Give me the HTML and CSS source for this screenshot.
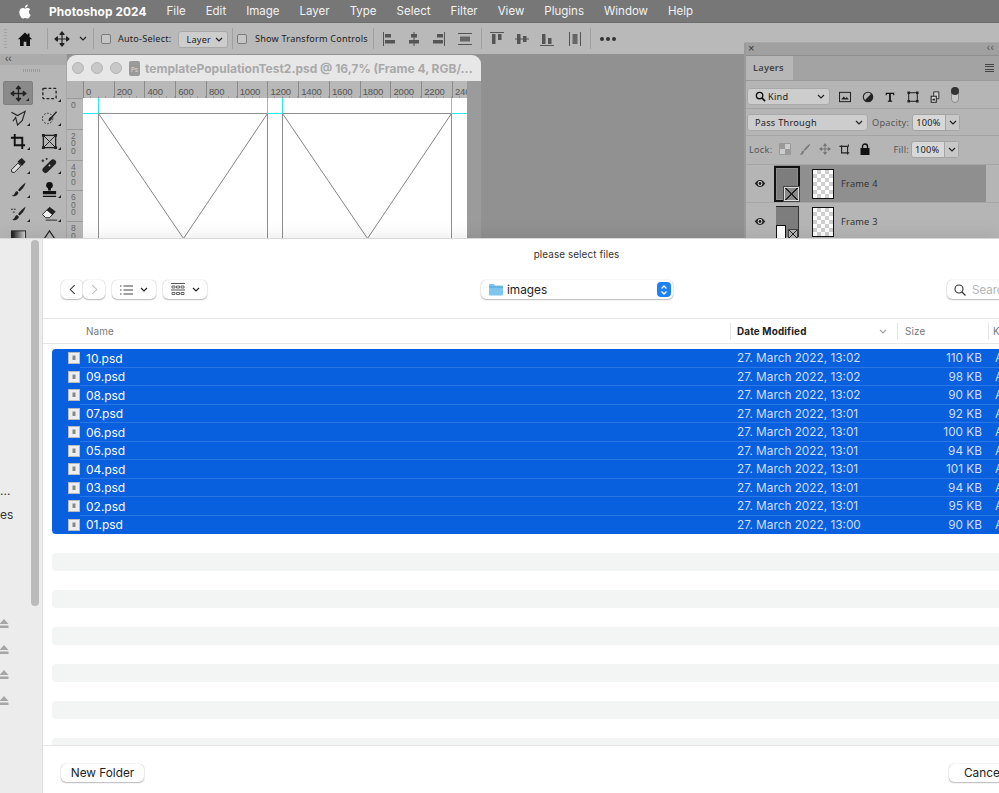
FILE: index.html
```html
<!DOCTYPE html>
<html lang="en">
<head>
<meta charset="utf-8">
<title>Photoshop 2024 - please select files</title>
<link rel="stylesheet" href="styles.css">
</head>
<body>
<svg class="defs" width="0" height="0" aria-hidden="true">
  <symbol id="move" viewBox="0 0 16 16"><path d="M8 1v14M1 8h14M8 1 6 3.400h4zM8 15l-2-2.400h4zM1 8l2.400-2v4zM15 8l-2.400-2v4z" fill="#222" stroke="#222" stroke-width="1.200" stroke-linejoin="round"/></symbol>
  <symbol id="chev" viewBox="0 0 8 5"><path d="M1 1l3 3 3-3" fill="none" stroke="#222" stroke-width="1.200"/></symbol>
  <symbol id="eye" viewBox="0 0 14 10"><path d="M1 5c2-3 4-4 6-4s4 1 6 4c-2 3-4 4-6 4S3 8 1 5z" fill="#222"/><circle cx="7" cy="5" r="2.800" fill="#ddd"/><circle cx="7" cy="5" r="1.700" fill="#222"/></symbol>
  <symbol id="eject" viewBox="0 0 10 9"><path d="M5 0l4.500 5h-9zM.5 6.500h9V9h-9z" fill="#a6a6a6"/></symbol>
  <symbol id="doc" viewBox="0 0 12 12"><rect width="12" height="12" fill="#eee"/><rect x=".5" y=".5" width="11" height="11" fill="none" stroke="#bbb"/><rect x="4.500" y="3.500" width="3" height="4.500" fill="#888"/></symbol>
</svg>
<div class="screen">
  <header class="menubar">
    <svg class="apple" viewBox="0 0 24 24"><path fill="#fff" d="M12.152 6.896c-.948 0-2.415-1.078-3.960-1.040-2.040.027-3.910 1.183-4.961 3.014-2.117 3.675-.546 9.103 1.519 12.090 1.013 1.454 2.208 3.090 3.792 3.039 1.520-.065 2.090-.987 3.935-.987 1.831 0 2.350.987 3.960.948 1.637-.026 2.676-1.480 3.676-2.948 1.156-1.688 1.636-3.325 1.662-3.415-.039-.013-3.182-1.221-3.220-4.857-.026-3.040 2.480-4.494 2.597-4.559-1.429-2.090-3.623-2.324-4.390-2.376-2-.156-3.675 1.090-4.610 1.090zM15.530 3.830c.843-1.012 1.400-2.427 1.245-3.830-1.207.052-2.662.805-3.532 1.818-.780.896-1.454 2.338-1.273 3.714 1.338.104 2.715-.688 3.559-1.701"/></svg>
    <strong class="app">Photoshop 2024</strong>
    <span>File</span><span>Edit</span><span>Image</span><span>Layer</span><span>Type</span><span>Select</span><span>Filter</span><span>View</span><span>Plugins</span><span>Window</span><span>Help</span>
  </header>
  <div class="options">
    <div class="grp g-home"><i class="grip"></i><svg class="ic16" viewBox="0 0 16 16"><path d="M8 1.500.8 8.200h2.200V15h3.700v-4.300h2.600V15H13V8.200h2.200L12.500 5.700V2.500h-1.800v1.500z" fill="#111"/></svg></div>
    <div class="grp g-move"><svg class="ic16"><use href="#move"/></svg><svg class="chev"><use href="#chev"/></svg></div>
    <div class="grp g-auto"><i class="check"></i><span>Auto-Select:</span><div class="select sel-layer">Layer<svg class="chev"><use href="#chev"/></svg></div></div>
    <div class="grp g-show"><i class="check"></i><span>Show Transform Controls</span></div>
    <div class="grp g-align">
      <svg class="ic16" viewBox="0 0 16 16"><path d="M1.500 1v14" stroke="#555" fill="none"/><path d="M3 3h6v3.500H3zM3 9h10v3.500H3z" fill="#555"/></svg>
      <svg class="ic16" viewBox="0 0 16 16"><path d="M8 1v14" stroke="#555" fill="none"/><path d="M5 3h6v3.500H5zM3 9h10v3.500H3z" fill="#555"/></svg>
      <svg class="ic16" viewBox="0 0 16 16"><path d="M14.500 1v14" stroke="#555" fill="none"/><path d="M7 3h6v3.500H7zM3 9h10v3.500H3z" fill="#555"/></svg>
      <svg class="ic16 i-last" viewBox="0 0 16 16"><path d="M1 2.500h14M1 13.500h14" stroke="#555" fill="none"/><path d="M3 5.500h10v5H3z" fill="#666"/></svg>
    </div>
    <div class="grp g-dist">
      <svg class="ic16" viewBox="0 0 16 16"><path d="M1 1.500h14" stroke="#555" fill="none"/><path d="M3 3h3.500v10H3zM9 3h3.500v6H9z" fill="#555"/></svg>
      <svg class="ic16" viewBox="0 0 16 16"><path d="M1 8h14" stroke="#555" fill="none"/><path d="M3 3h3.500v10H3zM9 5h3.500v6H9z" fill="#555"/></svg>
      <svg class="ic16" viewBox="0 0 16 16"><path d="M1 14.500h14" stroke="#555" fill="none"/><path d="M3 3h3.500v10H3zM9 7h3.500v6H9z" fill="#555"/></svg>
      <svg class="ic16 i-last" viewBox="0 0 16 16"><path d="M2.500 1v14M13.500 1v14" stroke="#555" fill="none"/><path d="M5.500 3h5v10h-5z" fill="#666"/></svg>
    </div>
    <div class="dots"><i></i><i></i><i></i></div>
  </div>

  <aside class="tools">
    <div class="tools-head">‹‹</div>
    <div class="tools-grip"></div>
    <div class="tool-grid">
      <div class="tool active"><svg class="ic18"><use href="#move"/></svg></div>
      <div class="tool"><svg class="ic18" viewBox="0 0 18 18"><rect x="2" y="3.500" width="14" height="11" rx="1" fill="none" stroke="#222" stroke-width="1.400" stroke-dasharray="3 2"/></svg></div>
      <div class="tool"><svg class="ic18" viewBox="0 0 18 18"><path d="M1.500 3.500 8 7l8-4.500L13 12l-5 5-2-8-3 4" fill="none" stroke="#222" stroke-width="1.200"/></svg></div>
      <div class="tool"><svg class="ic18" viewBox="0 0 18 18"><circle cx="7" cy="10" r="5.500" fill="none" stroke="#333" stroke-dasharray="2 1.500"/><path d="M8 13c0-3 1-4 3-5l5-5.500 1 1L12 9c-.5 2.500-2 4-4 4z" fill="#222"/></svg></div>
      <div class="tool"><svg class="ic18" viewBox="0 0 18 18"><path d="M5 1v12h11M1 5h12v12" fill="none" stroke="#111" stroke-width="2"/></svg></div>
      <div class="tool"><svg class="ic18" viewBox="0 0 18 18"><rect x="2.500" y="2.500" width="13" height="13" fill="none" stroke="#222" stroke-width="1.400"/><path d="M2.500 2.500l13 13M15.500 2.500l-13 13" stroke="#222"/><path d="M1 1h3v3H1zM14 1h3v3h-3zM1 14h3v3H1zM14 14h3v3h-3z" fill="#222"/></svg></div>
      <div class="tool"><svg class="ic18" viewBox="0 0 18 18"><path d="M2 16l-.5-2.500 7-7 3 3-7 7z" fill="#ddd" stroke="#222"/><path d="M8 5l2-2 2.500-2 4 4-2 2.500-2 2z" fill="#222"/></svg></div>
      <div class="tool"><svg class="ic18" viewBox="0 0 18 18"><path d="M2.500 11.500l8-8a3 3 0 0 1 4.500 4.500l-8 8a3 3 0 0 1-4.500-4.500z" fill="#222"/><circle cx="9" cy="9" r="1" fill="#ccc"/><path d="M2 2.500v3M.5 4h3M6 1v2M5 2h2" stroke="#222"/></svg></div>
      <div class="tool"><svg class="ic18" viewBox="0 0 18 18"><path d="M16.500 1.500c-2 1.500-6 5-8 8l1.500 1.500c3-2 6-6 6.500-9.500zM7.500 10.500c-2 .5-2 2-3 3.500-.5.800-2 1.500-2.500 1.500 2 1 6 1 7-3z" fill="#222"/></svg></div>
      <div class="tool"><svg class="ic18" viewBox="0 0 18 18"><circle cx="9" cy="4.500" r="3.500" fill="#111"/><path d="M7.500 7h3v3h-3zM2 10.500h14V14H2zM2 15.500h14V17H2z" fill="#111"/></svg></div>
      <div class="tool"><svg class="ic18" viewBox="0 0 18 18"><path d="M16.500 1.500c-2 1.500-6 5-8 8l1.500 1.500c3-2 6-6 6.500-9.500zM7.500 10.500c-2 .5-2 2-3 3.500l-2 1.500c2 1 6 1 7-3z" fill="#222"/><path d="M1 4.500h6M3 7.500h3" stroke="#222" stroke-dasharray="2 1"/></svg></div>
      <div class="tool"><svg class="ic18" viewBox="0 0 18 18"><path d="M1.500 10 9 2.500l6 4.500-6 6.500H5z" fill="#eee" stroke="#222"/><path d="M9 2.500l6 4.500-3 3.500-6-5z" fill="#222"/><path d="M5 16h12" stroke="#222"/></svg></div>
      <div class="tool"><svg class="ic18" viewBox="0 0 18 18"><defs><linearGradient id="gr" x1="0" x2="1"><stop offset="0" stop-color="#111"/><stop offset="1" stop-color="#ddd"/></linearGradient></defs><rect x="1.500" y="2" width="15" height="14" fill="url(#gr)" stroke="#222"/></svg></div>
      <div class="tool"><svg class="ic18" viewBox="0 0 18 18"><path d="M9 2l6 9-3 5H6l-3-5z" fill="none" stroke="#222" stroke-width="1.200"/></svg></div>
    </div>
  </aside>

  <section class="doc">
    <div class="doc-title">
      <i class="light"></i><i class="light"></i><i class="light"></i>
      <span class="ps-file">Ps</span>
      <span class="doc-name">templatePopulationTest2.psd @ 16,7% (Frame 4, RGB/...</span>
    </div>
    <div class="ruler-h">
      <span class="corner"></span>
      <span class="rt">0</span><span class="rt">200</span><span class="rt">400</span><span class="rt">600</span><span class="rt">800</span><span class="rt">1000</span><span class="rt">1200</span><span class="rt">1400</span><span class="rt">1600</span><span class="rt">1800</span><span class="rt">2000</span><span class="rt">2200</span><span class="rt rt-end">240</span>
    </div>
    <div class="doc-body">
      <div class="ruler-v">
        <span class="vt">0</span><span class="vt">2<br>0<br>0</span><span class="vt">4<br>0<br>0</span><span class="vt">6<br>0<br>0</span><span class="vt">8<br>0<br>0</span>
      </div>
      <svg class="canvas" viewBox="0 0 384 160">
        <path d="M15.500 15.500V160M184.500 15.500V160M199.500 15.500V160M368.500 15.500V160M0 15.500H384" fill="none" stroke="#8f8f8f" stroke-width="1"/>
        <path d="M15.500 15.500 100.500 140.500 184.500 15.500M199.500 15.500 284.500 140.500 368.500 15.500" fill="none" stroke="#777" stroke-width=".9"/>
        <path d="M15.500 0V15.500M184.500 0V15.500M199.500 0V15.500M368.500 0V15.500M0 15.500H15.500M184.500 15.500H199.500M368.500 15.500H384" fill="none" stroke="#2fe8ee" stroke-width="1"/>
      </svg>
    </div>
  </section>

  <section class="layers">
    <div class="panel-top"><span>×</span><span class="collapse">‹‹</span></div>
    <div class="tabs"><span class="tab">Layers</span><span class="burger"><i></i><i></i><i></i><i></i></span></div>
    <div class="row-filter">
      <div class="select sel-kind"><svg class="mag" viewBox="0 0 12 12"><circle cx="5" cy="5" r="3.500" fill="none" stroke="#111" stroke-width="1.500"/><path d="M7.500 7.500 11 11" stroke="#111" stroke-width="1.800"/></svg><span class="sel-txt">Kind</span><svg class="chev"><use href="#chev"/></svg></div>
      <svg class="fi" viewBox="0 0 14 12"><rect x=".6" y=".6" width="12.800" height="10.800" fill="none" stroke="#222" stroke-width="1.200"/><path d="M2.500 9l3-3.500 2 2 1.500-1.500 2.500 3z" fill="#222"/></svg>
      <svg class="fi" viewBox="0 0 14 14"><circle cx="7" cy="7" r="5.500" fill="none" stroke="#222" stroke-width="1.300"/><path d="M11 3a5.500 5.500 0 0 1-8 8z" fill="#222"/></svg>
      <svg class="fi" viewBox="0 0 14 14"><path d="M2 2h10v3h-1l-.5-1.500H8V11l1.500.5V12.500h-5V11.500L6 11V3.500H3.500L3 5H2z" fill="#111"/></svg>
      <svg class="fi" viewBox="0 0 14 14"><rect x="2" y="2" width="10" height="10" fill="none" stroke="#222" stroke-width="1.200"/><path d="M.5.5h3v3h-3zM10.500.5h3v3h-3zM.5 10.500h3v3h-3zM10.500 10.500h3v3h-3z" fill="#222"/></svg>
      <svg class="fi" viewBox="0 0 14 14"><path d="M5.500 1h6v8h-6z" fill="#ccc" stroke="#222"/><path d="M2.500 6h6v7h-6z" fill="#ddd" stroke="#222" stroke-width="1.200"/><path d="M4 9h3v2H4z" fill="#222"/></svg>
      <div class="toggle"><i></i></div>
    </div>
    <div class="row-blend">
      <div class="select sel-blend">Pass Through<svg class="chev"><use href="#chev"/></svg></div>
      <span class="lbl">Opacity:</span>
      <div class="combo"><span>100%</span><b><svg class="chev"><use href="#chev"/></svg></b></div>
    </div>
    <div class="row-lock">
      <span class="lbl">Lock:</span>
      <svg class="li" viewBox="0 0 12 12"><path d="M.5.5h11v11H.5z" fill="#ccc" stroke="#999"/><path d="M1 1h5v5H1zM6 6h5v5H6z" fill="#999"/></svg>
      <svg class="li" viewBox="0 0 12 12"><path d="M11.500.5C9 2 6 5 4.500 7l1 1c2-1.500 5-4.500 6-7.500zM4 7.500c-1.500.5-1 2-2 3L.5 11.500c2 .5 4 0 4.500-3z" fill="#777"/></svg>
      <svg class="li" viewBox="0 0 16 16"><use href="#move" opacity=".45"/></svg>
      <svg class="li" viewBox="0 0 14 14"><path d="M3 2.500v9h9M.5 4h9.500v9.500" fill="none" stroke="#222" stroke-width="1.300"/><path d="M11 1.500v3" stroke="#222"/></svg>
      <svg class="li" viewBox="0 0 12 12"><path d="M3.500 5.500V3.500a2.500 2.500 0 0 1 5 0v2" fill="none" stroke="#111" stroke-width="1.400"/><rect x="1.500" y="5" width="9" height="7" fill="#111"/></svg>
      <span class="lbl lbl-fill">Fill:</span>
      <div class="combo"><span>100%</span><b><svg class="chev"><use href="#chev"/></svg></b></div>
    </div>
    <div class="layer current">
      <span class="eye-col"><svg class="eye"><use href="#eye"/></svg></span>
      <span class="thumb thumb-a"><i class="badge"></i></span>
      <span class="mask"></span>
      <span class="lname">Frame 4</span>
    </div>
    <div class="layer">
      <span class="eye-col"><svg class="eye"><use href="#eye"/></svg></span>
      <span class="thumb thumb-b"><i class="page"></i><i class="badge2"></i></span>
      <span class="mask"></span>
      <span class="lname">Frame 3</span>
    </div>
  </section>

  <section class="dialog">
    <aside class="side">
      <div class="thumbbar"></div>
      <div class="side-t1">...</div>
      <div class="side-t2">es</div>
      <svg class="ej ej1"><use href="#eject"/></svg>
      <svg class="ej"><use href="#eject"/></svg>
      <svg class="ej"><use href="#eject"/></svg>
      <svg class="ej"><use href="#eject"/></svg>
    </aside>
    <div class="main">
      <div class="d-title">please select files</div>
      <div class="d-bar">
        <div class="seg">
          <span class="btn b-nav"><svg viewBox="0 0 8 12" class="nav"><path d="M6.500 1 1.500 6l5 5" fill="none" stroke="#333" stroke-width="1.200"/></svg></span>
          <span class="btn b-nav"><svg viewBox="0 0 8 12" class="nav"><path d="M1.500 1l5 5-5 5" fill="none" stroke="#bbb" stroke-width="1.200"/></svg></span>
        </div>
        <span class="btn b-view">
          <svg class="vi" viewBox="0 0 13 10"><path d="M3.500 1H13M3.500 5H13M3.500 9H13" stroke="#444" stroke-width="1.100"/><path d="M0 .5h1.500v1H0zM0 4.500h1.500v1H0zM0 8.500h1.500v1H0z" fill="#444"/></svg>
          <svg class="chev"><use href="#chev"/></svg>
        </span>
        <span class="btn b-view b-grid">
          <svg class="vi2" viewBox="0 0 14 14"><path d="M0 .5h14M0 7h14" stroke="#555"/><path d="M1 3h3v2H1zM5.500 3h3v2h-3zM10 3h3v2h-3zM1 9.500h3v2H1zM5.500 9.500h3v2h-3zM10 9.500h3v2h-3z" fill="none" stroke="#444" stroke-width=".8"/></svg>
          <svg class="chev"><use href="#chev"/></svg>
        </span>
        <div class="path">
          <svg class="folder" viewBox="0 0 14 12"><path d="M0 1.500A1 1 0 0 1 1 .5h4l1 1.500h7a1 1 0 0 1 1 1V11a1 1 0 0 1-1 1H1a1 1 0 0 1-1-1z" fill="#7ec6ee"/><path d="M0 3h14v1H0z" fill="#4ea4d8"/></svg>
          <span>images</span>
          <span class="stepper"><svg viewBox="0 0 8 12" class="step"><path d="M1.500 4.500 4 2l2.500 2.500M1.500 7.500 4 10l2.500-2.500" fill="none" stroke="#fff" stroke-width="1.300"/></svg></span>
        </div>
        <div class="search">
          <svg class="srch" viewBox="0 0 12 12"><circle cx="5" cy="5" r="4" fill="none" stroke="#333" stroke-width="1.100"/><path d="M8 8l3.500 3.500" stroke="#333" stroke-width="1.200"/></svg>
          <span>Search</span>
        </div>
      </div>
      <div class="head">
        <span class="h-name">Name</span>
        <span class="h-date"><b>Date Modified</b><svg class="chev lt"><use href="#chev"/></svg></span>
        <span class="h-size">Size</span>
        <span class="h-kind">Kind</span>
      </div>
      <div class="list">
        <div class="files">
          <div class="file"><svg class="ficon"><use href="#doc"/></svg><span class="fn">10.psd</span><span class="fd">27. March 2022, 13:02</span><span class="fs">110 KB</span><span>Adobe</span></div>
          <div class="file"><svg class="ficon"><use href="#doc"/></svg><span class="fn">09.psd</span><span class="fd">27. March 2022, 13:02</span><span class="fs">98 KB</span><span>Adobe</span></div>
          <div class="file"><svg class="ficon"><use href="#doc"/></svg><span class="fn">08.psd</span><span class="fd">27. March 2022, 13:02</span><span class="fs">90 KB</span><span>Adobe</span></div>
          <div class="file"><svg class="ficon"><use href="#doc"/></svg><span class="fn">07.psd</span><span class="fd">27. March 2022, 13:01</span><span class="fs">92 KB</span><span>Adobe</span></div>
          <div class="file"><svg class="ficon"><use href="#doc"/></svg><span class="fn">06.psd</span><span class="fd">27. March 2022, 13:01</span><span class="fs">100 KB</span><span>Adobe</span></div>
          <div class="file"><svg class="ficon"><use href="#doc"/></svg><span class="fn">05.psd</span><span class="fd">27. March 2022, 13:01</span><span class="fs">94 KB</span><span>Adobe</span></div>
          <div class="file"><svg class="ficon"><use href="#doc"/></svg><span class="fn">04.psd</span><span class="fd">27. March 2022, 13:01</span><span class="fs">101 KB</span><span>Adobe</span></div>
          <div class="file"><svg class="ficon"><use href="#doc"/></svg><span class="fn">03.psd</span><span class="fd">27. March 2022, 13:01</span><span class="fs">94 KB</span><span>Adobe</span></div>
          <div class="file"><svg class="ficon"><use href="#doc"/></svg><span class="fn">02.psd</span><span class="fd">27. March 2022, 13:01</span><span class="fs">95 KB</span><span>Adobe</span></div>
          <div class="file"><svg class="ficon"><use href="#doc"/></svg><span class="fn">01.psd</span><span class="fd">27. March 2022, 13:00</span><span class="fs">90 KB</span><span>Adobe</span></div>
        </div>
        <div class="stripe"></div><div class="stripe"></div><div class="stripe"></div><div class="stripe"></div><div class="stripe"></div><div class="stripe"></div>
      </div>
      <div class="foot">
        <span class="btn b-foot">New Folder</span>
        <span class="btn b-foot b-cancel">Cancel</span>
      </div>
    </div>
  </section>
</div>
</body>
</html>
```

FILE: styles.css
```css
* { box-sizing: border-box; }
html, body { margin: 0; padding: 0; }
body { font-family: "Inter", "Liberation Sans", sans-serif; background: #909090; }
i { display: block; font-style: normal; }
svg { display: block; flex-shrink: 0; }
.defs { position: absolute; }
.screen { position: relative; width: 999px; height: 793px; overflow: hidden; background: #919191; }

/* menu bar */
.menubar { height: 23px; background: #777; border-bottom: 1px solid #6c6c6c; display: flex; align-items: center; gap: 20px; padding-left: 18px; color: #f2f2f2; font-size: 11.500px; }
.apple { width: 14px; height: 15px; margin-right: -3px; }
.app { font-weight: 700; color: #fff; font-size: 11.900px; letter-spacing: .08px; }

/* options */
.options { height: 31px; background: #b9b9b9; display: flex; align-items: center; font-family: "Noto Sans", sans-serif; font-size: 9.100px; letter-spacing: .22px; color: #222; white-space: nowrap; }
.grp { height: 21px; display: flex; align-items: center; border-right: 1px solid #a0a0a0; position: relative; }
.grip { width: 3px; height: 20px; margin-left: 4px; margin-right: 10px; background: repeating-linear-gradient(#a2a2a2 0 1px, transparent 1px 3px); }
.ic16 { width: 16px; height: 16px; }
.chev { width: 8px; height: 5px; }
.g-home { width: 48px; }
.g-move { width: 46px; padding-left: 6px; gap: 9px; }
.g-auto { width: 139px; padding-left: 7px; gap: 7px; }
.g-show { width: 141px; padding-left: 4px; gap: 8px; }
.g-align { width: 108px; padding-left: 8px; gap: 8px; }
.g-dist { width: 109px; padding-left: 7px; gap: 9px; }
.i-last { margin-left: 3px; }
.check { width: 10px; height: 10px; border: 1px solid #7c7c7c; background: #c6c6c6; border-radius: 2px; }
.select { display: flex; align-items: center; justify-content: space-between; background: #cdcdcd; border: 1px solid #a9a9a9; border-radius: 3px; height: 17px; }
.sel-layer { width: 50px; padding: 0 4px 0 7px; margin-top: 1px; }
.dots { display: flex; gap: 2px; margin-left: 9px; }
.dots i { width: 4px; height: 4px; border-radius: 50%; background: #333; }

/* toolbar */
.tools { position: absolute; left: 0; top: 54px; width: 67px; height: 190px; background: #b6b6b6; border-right: 1px solid #a6a6a6; }
.tools-head { height: 11px; background: #ababab; font: 10px/10px "Liberation Sans", sans-serif; color: #444; padding-left: 5px; }
.tools-grip { height: 3px; width: 18px; margin: 4px auto 0 23px; background: repeating-linear-gradient(90deg, #999 0 1px, transparent 1px 2px); }
.tool-grid { display: grid; grid-template-columns: 30px 30px; grid-auto-rows: 24px; column-gap: 1px; padding: 9px 0 0 3px; }
.tool { display: flex; align-items: center; justify-content: center; position: relative; border-radius: 2px; }
.tool::after { content: ""; position: absolute; right: 3px; bottom: 3px; border-style: solid; border-width: 0 0 3px 3px; border-color: transparent transparent #222 transparent; }
.tool.active { background: #8a8a8a; border: 1px solid #7f7f7f; }
.ic18 { width: 17px; height: 17px; }

/* document */
.doc { position: absolute; left: 67px; top: 55px; width: 414px; height: 190px; background: #9b9b9b; border-radius: 9px 9px 0 0; overflow: hidden; }
.doc-title { height: 26px; background: #e7e7e7; display: flex; align-items: center; padding-left: 5px; gap: 8px; }
.light { width: 12px; height: 12px; border-radius: 50%; background: #c8c8c8; border: 1px solid #b4b4b4; margin-right: -1px; }
.ps-file { width: 11px; height: 15px; background: #9a9a9a; border-radius: 2px; font-size: 6px; line-height: 17px; text-align: center; color: #ddd; }
.doc-name { font-weight: 700; font-size: 12px; color: #a9a9a9; white-space: nowrap; margin-left: -3px; }
.ruler-h { height: 17px; display: flex; background: #b8b8b8; width: 400px; font: 9.500px/1 "Liberation Sans", sans-serif; color: #555; }
.corner { width: 16px; background: #b3b3b3; }
.rt { width: 30.800px; border-left: 1px solid #8a8a8a; padding: 6px 0 0 2px; letter-spacing: -.2px; background: repeating-linear-gradient(90deg, transparent 0 6px, #999 6px 7px, transparent 7px 7.700px) bottom / 100% 2px no-repeat; }
.rt-end { width: 15px; overflow: hidden; }
.doc-body { display: flex; height: 147px; }
.ruler-v { width: 16px; background: #b8b8b8; font: 8.500px/7.500px "Liberation Sans", sans-serif; color: #666; overflow: hidden; flex-shrink: 0; }
.vt { display: block; height: 30.800px; border-top: 1px solid #9a9a9a; padding: 3px 0 0 4px; }
.canvas { width: 384px; height: 160px; background: #fff; flex-shrink: 0; }

/* layers panel */
.layers { position: absolute; left: 744px; top: 42px; width: 255px; height: 200px; background: #b5b5b5; border-left: 2px solid #9a9a9a; border-top: 1px solid #a8a8a8; border-radius: 2px 0 0 0; font-family: "Noto Sans", sans-serif; font-size: 9.200px; letter-spacing: .25px; color: #222; white-space: nowrap; }
.panel-top { height: 12px; background: #a0a0a0; display: flex; justify-content: space-between; padding: 0 5px 0 2px; font: 11px/10px "Liberation Sans", sans-serif; color: #333; }
.collapse { font-size: 10px; color: #555; }
.tabs { height: 26px; background: #a3a3a3; display: flex; align-items: stretch; justify-content: space-between; border-top: 1px solid #8f8f8f; border-bottom: 1px solid #9a9a9a; }
.tab { width: 47px; background: #b7b7b7; font-weight: 600; padding-left: 7px; line-height: 24px; color: #444; }
.burger { display: flex; flex-direction: column; gap: 1.500px; justify-content: center; padding-right: 5px; }
.burger i { width: 9px; height: 1px; background: #444; }
.row-filter { height: 28px; display: flex; align-items: center; padding: 4px 0 0 1px; border-bottom: 1px solid #a4a4a4; }
.sel-kind { width: 83px; padding: 0 4px 0 7px; }
.mag { width: 11px; height: 11px; }
.sel-txt { margin-left: 2px; flex: 1; }
.fi { width: 12px; height: 12px; margin-left: 10.500px; }
.sel-kind + .fi { margin-left: 9px; }
.toggle { width: 8px; height: 16px; border: 1px solid #8d8d8d; background: #c8c8c8; border-radius: 4px; margin: -4px 0 0 10px; position: relative; }
.toggle i { width: 8px; height: 8px; border-radius: 50%; background: #333; margin: -1px 0 0 -1px; }
.row-blend { height: 27px; display: flex; align-items: center; padding: 1px 0 0 1px; gap: 4px; border-bottom: 1px solid #a4a4a4; }
.sel-blend { width: 121px; padding: 0 4px 0 7px; }
.lbl { color: #555; }
.combo { display: flex; height: 17px; background: #d8d8d8; border: 1px solid #a4a4a4; border-radius: 3px; align-items: center; padding-left: 3px; width: 48px; color: #222; margin-left: -1px; }
.combo span { flex: 1; border-right: 1px solid #a4a4a4; line-height: 15px; }
.combo b { width: 13px; display: flex; justify-content: center; background: #c8c8c8; height: 15px; align-items: center; }
.row-lock { height: 28px; display: flex; align-items: center; padding: 0 0 2px 3px; }
.li { width: 12px; height: 12px; margin-left: 8px; }
.row-lock .lbl:first-child + .li { margin-left: 7px; }
.lbl-fill { margin-left: 22px; margin-right: 3px; }
.layer { height: 38px; display: flex; align-items: center; border-top: 1px solid #a6a6a6; position: relative; }
.eye-col { width: 28px; display: flex; justify-content: center; }
.eye { width: 12px; height: 9px; }
.layer.current::before { content: ""; position: absolute; left: 28px; width: 212px; top: 0; bottom: 0; background: #8f8f8f; }
.layer > span { position: relative; }
.thumb { display: block; width: 26px; height: 36px; }
.thumb-a { background: #7d7d7d; border: 2px solid #111; box-shadow: 0 0 0 1px #8f8f8f inset; }
.badge { position: absolute; right: -1px; bottom: -1px; width: 15px; height: 14px; border: 1px solid #ddd; background: linear-gradient(45deg, transparent 46%, #222 46% 54%, transparent 54%), linear-gradient(-45deg, transparent 46%, #222 46% 54%, transparent 54%), #8a8a8a; outline: 1px solid #444; }
.thumb-b { width: 23px; height: 31px; background: #7d7d7d; border-top: 1px solid #222; border-right: 1px solid #333; margin: 3px 1px 0 2px; align-self: flex-start; }
.page { position: absolute; left: 0; bottom: -2px; width: 10px; height: 14px; background: #fff; border: 1px solid #111; }
.badge2 { position: absolute; right: 0; bottom: -2px; width: 10px; height: 10px; background: linear-gradient(45deg, transparent 44%, #222 44% 56%, transparent 56%), linear-gradient(-45deg, transparent 44%, #222 44% 56%, transparent 56%), #b5b5b5; border: 1px solid #444; }
.mask { display: block; width: 22px; height: 30px; margin-left: 12px; border: 1px solid #111; background: repeating-conic-gradient(#cfcfcf 0 25%, #fff 0 50%) 0 0 / 8px 8px; }
.lname { margin-left: 7px; color: #333; }

/* dialog */
.dialog { position: absolute; left: 0; top: 238px; width: 999px; height: 555px; background: #fff; display: flex; box-shadow: 0 0 18px rgba(0,0,0,.1); border-top: 1px solid #d8d8d8; }
.side { width: 43px; background: #ececec; border-right: 1px solid #dcdcdc; position: relative; padding-top: 245px; font-size: 12px; color: #333; overflow: hidden; flex-shrink: 0; }
.thumbbar { position: absolute; left: 31px; top: 1px; width: 8px; height: 366px; background: #bbb; border-radius: 4px; }
.side-t1 { line-height: 14px; }
.side-t2 { line-height: 14px; margin-top: 10px; }
.ej { width: 10px; height: 9px; margin-bottom: 16.700px; margin-left: -1px; }
.ej1 { margin-top: 97px; }
.main { flex: 1; display: flex; flex-direction: column; min-width: 0; overflow: hidden; }
.d-title { height: 31px; text-align: center; font-size: 9.900px; line-height: 31px; color: #333; margin-left: 111px; letter-spacing: .1px; }
.d-bar { height: 48px; display: flex; align-items: flex-start; padding: 10px 0 0 18px; }
.seg { display: flex; gap: 0; }
.btn { background: #fff; border-radius: 5px; box-shadow: 0 0 1px rgba(0,0,0,.35), 0 1px 1.500px rgba(0,0,0,.25); display: flex; align-items: center; flex-shrink: 0; }
.b-nav { width: 22px; height: 19px; justify-content: center; }
.nav { width: 7px; height: 11px; }
.b-view { width: 44px; height: 19px; margin-left: 7px; justify-content: center; gap: 7px; }
.vi { width: 13px; height: 10px; }
.vi2 { width: 14px; height: 14px; }
.path { width: 192px; height: 19px; margin-left: 274px; background: #fff; border-radius: 5px; box-shadow: 0 0 1px rgba(0,0,0,.35), 0 1px 1.500px rgba(0,0,0,.25); display: flex; align-items: center; padding: 0 2px 0 8px; font-size: 11.800px; color: #222; flex-shrink: 0; }
.folder { width: 14px; height: 13px; margin-right: 4px; }
.path > span:nth-of-type(1) { flex: 1; }
.stepper { width: 14px; height: 15px; border-radius: 4px; background: #1e82f4; display: flex; align-items: center; justify-content: center; }
.step { width: 8px; height: 12px; }
.search { width: 100px; height: 19px; margin-left: 274px; border-radius: 5px; box-shadow: 0 0 1px rgba(0,0,0,.35), 0 1px 1.500px rgba(0,0,0,.25); display: flex; align-items: center; padding-left: 7px; gap: 6px; font-size: 11.500px; color: #b5b5b5; flex-shrink: 0; }
.srch { width: 12px; height: 12px; }
.head { height: 26px; display: flex; flex-shrink: 0; width: 1040px; align-items: center; border-top: 1px solid #e6e6e6; border-bottom: 1px solid #e6e6e6; font-size: 9.900px; color: #777; letter-spacing: .15px; }
.head > span { height: 17px; line-height: 17px; }
.h-name { width: 687px; padding-left: 43px; }
.h-date { width: 167px; border-left: 1px solid #e6e6e6; padding: 0 10px 0 6px; display: flex; align-items: center; justify-content: space-between; color: #222; }
.lt { opacity: .4; }
.h-size { width: 91px; border-left: 1px solid #e6e6e6; padding-left: 7px; }
.h-kind { border-left: 1px solid #e6e6e6; padding-left: 4px; }
.list { flex: 1; min-height: 0; overflow: hidden; padding: 5px 0 0 9px; }
.files { background: #0860df; border-radius: 4px 0 0 4px; width: 1000px; }
.file { height: 18.500px; display: grid; grid-template-columns: 12px 657px 160px 85px 80px; align-items: center; padding-left: 16px; color: #e9f0fc; font-size: 11.800px; position: relative; }
.file::after { content: ""; position: absolute; left: 28px; right: 0; bottom: 0; height: 1px; background: rgba(255,255,255,.14); }
.file:last-child::after { display: none; }
.ficon { width: 12px; height: 12px; }
.fn { padding-left: 6px; color: #fff; font-size: 12px; }
.fd { color: #cfdef7; }
.fs { text-align: right; color: #cfdef7; }
.file > span:last-child { padding-left: 13px; color: #cfdef7; }
.stripe { height: 18px; background: #f3f4f4; border-radius: 4px 0 0 4px; margin-top: 19px; width: 1000px; }
.foot { height: 48px; flex-shrink: 0; border-top: 1px solid #e8e8e8; display: flex; align-items: flex-start; padding: 18px 0 0 18px; width: 1040px; }
.b-foot { height: 18px; font-size: 11.800px; color: #222; width: 83px; justify-content: center; }
.b-cancel { margin-left: 805px; justify-content: flex-start; padding-left: 15px; }
```
